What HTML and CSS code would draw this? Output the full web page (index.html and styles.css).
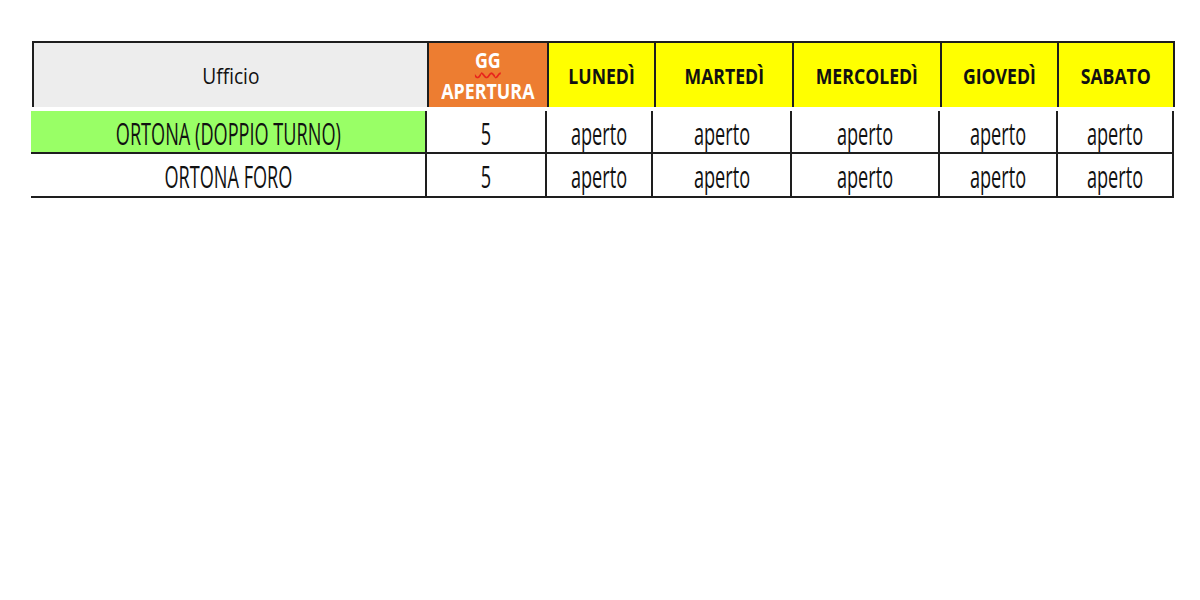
FILE: index.html
```html
<!DOCTYPE html>
<html lang="it">
<head>
<meta charset="utf-8">
<title>Orari uffici</title>
<link rel="stylesheet" href="styles.css">
</head>
<body>
<div class="sheet">
  <div class="head">
    <div class="hc office"><span class="t">Ufficio</span></div>
    <div class="hc open"><span class="t"><span class="squig">GG</span><br>APERTURA</span></div>
    <div class="hc day"><span class="t">LUNEDÌ</span></div>
    <div class="hc day"><span class="t">MARTEDÌ</span></div>
    <div class="hc day"><span class="t">MERCOLEDÌ</span></div>
    <div class="hc day"><span class="t">GIOVEDÌ</span></div>
    <div class="hc day"><span class="t">SABATO</span></div>
  </div>
  <div class="row first">
    <div class="c green"><span class="t">ORTONA (DOPPIO TURNO)</span></div>
    <div class="c"><span class="t">5</span></div>
    <div class="c"><span class="t">aperto</span></div>
    <div class="c"><span class="t">aperto</span></div>
    <div class="c"><span class="t">aperto</span></div>
    <div class="c"><span class="t">aperto</span></div>
    <div class="c"><span class="t">aperto</span></div>
  </div>
  <div class="row">
    <div class="c"><span class="t">ORTONA FORO</span></div>
    <div class="c"><span class="t">5</span></div>
    <div class="c"><span class="t">aperto</span></div>
    <div class="c"><span class="t">aperto</span></div>
    <div class="c"><span class="t">aperto</span></div>
    <div class="c"><span class="t">aperto</span></div>
    <div class="c"><span class="t">aperto</span></div>
  </div>
</div>
</body>
</html>
```

FILE: styles.css
```css
html, body {
  margin: 0;
  padding: 0;
  background: #ffffff;
}

body {
  font-family: "Open Sans", "Liberation Sans", sans-serif;
  color: #111111;
}

.sheet {
  padding: 41px 0 0 31px;
}

.head {
  display: grid;
  grid-template-columns: 393px 118px 105px 136px 146px 115px 114px;
  grid-template-rows: 64px;
  column-gap: 2px;
  width: 1139px;
  margin-left: 1px;
  margin-bottom: 4px;
  background: #1e1e1e;
  border: 2px solid #1e1e1e;
  border-bottom: none;
}

.hc {
  display: flex;
  align-items: center;
  justify-content: center;
  text-align: center;
  overflow: hidden;
}

.t {
  display: inline-block;
  white-space: nowrap;
}

.office {
  background: #ededed;
  font-size: 22px;
}

.office .t {
  transform: scaleX(0.87);
}

.open {
  background: #ed7d31;
  color: #ffffff;
  font-weight: 700;
  font-size: 21px;
  line-height: 31px;
  padding-top: 1px;
}

.open .t {
  transform: scaleX(0.85);
}

.squig {
  text-decoration: underline wavy #e8261c;
  text-decoration-thickness: 1.5px;
  text-underline-offset: 4px;
}

.day {
  background: #ffff00;
  font-weight: 700;
  font-size: 21px;
  padding-top: 2px;
}

.day .t {
  transform: scaleX(0.84);
}

.row {
  display: grid;
  grid-template-columns: 394px 118px 104px 137px 146px 116px 114px;
  grid-template-rows: 42px;
  column-gap: 2px;
  width: 1141px;
  background: #1e1e1e;
  border-right: 2px solid #1e1e1e;
  border-bottom: 2px solid #1e1e1e;
}

.row.first {
  grid-template-rows: 41px;
}

.c {
  background: #ffffff;
  display: flex;
  align-items: center;
  justify-content: center;
  font-size: 31px;
  font-weight: 500;
  line-height: 1;
  padding-top: 3px;
  overflow: hidden;
}

.c .t {
  transform: scaleX(0.585);
}

.c.green {
  background: #99ff66;
}
```
